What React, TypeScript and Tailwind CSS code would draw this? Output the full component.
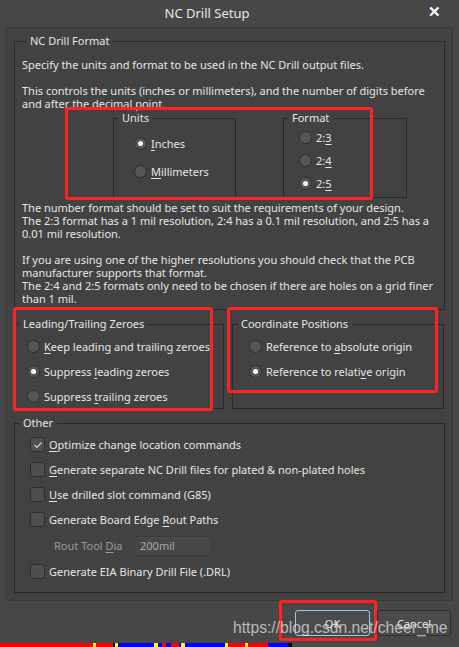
import React from "react";

const font = { fontFamily: '"Noto Sans", "Open Sans", Arial, sans-serif' };

function U({ children }: { children: React.ReactNode }) {
  return <span className="underline underline-offset-[2px] decoration-[1px]">{children}</span>;
}

function Radio({ checked }: { checked?: boolean }) {
  return (
    <span className="w-[13px] h-[13px] rounded-full bg-[#555555] border border-[#2f2f2f] flex items-center justify-center shrink-0">
      {checked && <span className="w-[5px] h-[5px] rounded-full bg-white" />}
    </span>
  );
}

function Check({ checked }: { checked?: boolean }) {
  return (
    <span className="w-[15px] h-[15px] rounded-[3px] bg-[#4e4e4e] border border-[#2f2f2f] flex items-center justify-center shrink-0">
      {checked && (
        <svg width="10" height="8" viewBox="0 0 10 8">
          <path d="M1.5 4 L4 6.5 L8.5 1.5" fill="none" stroke="#cfcfcf" strokeWidth="1.2" />
        </svg>
      )}
    </span>
  );
}

function Box({ title, className, children }: { title: string; className?: string; children: React.ReactNode }) {
  return (
    <fieldset className={"border border-[#2a2a2a] min-w-0 " + (className ?? "")}>
      <legend className="ml-[4px] px-[4px] text-[11px] leading-[14px] text-[#e6e6e6]">{title}</legend>
      {children}
    </fieldset>
  );
}

function RadioRow({ checked, children, h }: { checked?: boolean; children: React.ReactNode; h: string }) {
  return (
    <div className={"flex items-center gap-[4px] " + h}>
      <Radio checked={checked} />
      <span>{children}</span>
    </div>
  );
}

function CheckRow({ checked, children }: { checked?: boolean; children: React.ReactNode }) {
  return (
    <div className="flex items-center gap-[4px] h-[25px]">
      <Check checked={checked} />
      <span>{children}</span>
    </div>
  );
}

const strip: [number, string][] = [
  [93, "#ff0000"], [3, "#ffff00"], [17, "#ff0000"], [2, "#000080"], [3, "#ffff00"], [36, "#0000ff"],
  [4, "#ffff00"], [4, "#0000ff"], [4, "#ff0000"], [5, "#0000ff"], [8, "#ff0000"], [2, "#0000ff"],
  [4, "#ffff00"], [40, "#0000ff"], [3, "#ffff00"], [17, "#ff0000"], [3, "#ffff00"], [20, "#ff0000"],
  [20, "#0000ff"], [4, "#000000"], [167, "#4a4a4a"],
];

export default function App() {
  return (
    <div className="w-[459px] h-[647px] bg-[#474747] relative overflow-hidden whitespace-nowrap text-[#e6e6e6] text-[11px] leading-[13px]" style={font}>
      {/* title bar */}
      <div className="h-[27px] flex items-center justify-center pr-[45px] relative">
        <span className="text-[13px] text-[#e8e8e8]">NC Drill Setup</span>
        <span className="absolute right-[18px] top-[2px] text-[15px] leading-[18px] font-bold text-white">✕</span>
      </div>

      {/* main panel */}
      <div className="mx-[6px] h-[574px] border border-[#393939] bg-[#424242] px-[7px] pt-[6px] flex flex-col">
        <Box title="NC Drill Format" className="h-[276px] px-[7px]">
          <div className="pt-[10px] leading-[13px]">
            <div>Specify the units and format to be used in the NC Drill output files.</div>
            <div className="h-[13px]" />
            <div>This controls the units (inches or millimeters), and the number of digits before</div>
            <div>and after the decimal point.</div>
          </div>
          <div className="flex mt-[1px] pl-[91px] gap-[47px]">
            <Box title="Units" className="w-[123px] h-[87px]">
              <div className="pl-[20px] pt-[4px]">
                <RadioRow checked h="h-[28px]"><U>I</U>nches</RadioRow>
                <RadioRow h="h-[28px]"><U>M</U>illimeters</RadioRow>
              </div>
            </Box>
            <Box title="Format" className="w-[124px] h-[87px]">
              <div className="pl-[15px] pt-[1px]">
                <RadioRow h="h-[23px]">2:<U>3</U></RadioRow>
                <RadioRow h="h-[23px]">2:<U>4</U></RadioRow>
                <RadioRow checked h="h-[23px]">2:<U>5</U></RadioRow>
              </div>
            </Box>
          </div>
          <div className="pt-[3px]">
            <div>The number format should be set to suit the requirements of your design.</div>
            <div>The 2:3 format has a 1 mil resolution, 2:4 has a 0.1 mil resolution, and 2:5 has a</div>
            <div>0.01 mil resolution.</div>
            <div className="h-[13px]" />
            <div>If you are using one of the higher resolutions you should check that the PCB</div>
            <div>manufacturer supports that format.</div>
            <div>The 2:4 and 2:5 formats only need to be chosen if there are holes on a grid finer</div>
            <div>than 1 mil.</div>
          </div>
        </Box>

        <div className="flex gap-[8px] mt-[7px]">
          <Box title="Leading/Trailing Zeroes" className="w-[210px] h-[92px]">
            <div className="pl-[12px] pt-[3px]">
              <RadioRow h="h-[25px]"><U>K</U>eep leading and trailing zeroes</RadioRow>
              <RadioRow checked h="h-[25px]">Suppress <U>l</U>eading zeroes</RadioRow>
              <RadioRow h="h-[25px]">Suppress <U>t</U>railing zeroes</RadioRow>
            </div>
          </Box>
          <Box title="Coordinate Positions" className="w-[212px] h-[92px]">
            <div className="pl-[16px] pt-[3px]">
              <RadioRow h="h-[25px]">Reference to <U>a</U>bsolute origin</RadioRow>
              <RadioRow checked h="h-[25px]">Reference to relati<U>v</U>e origin</RadioRow>
            </div>
          </Box>
        </div>

        <Box title="Other" className="h-[177px] mt-[7px]">
          <div className="pl-[15px] pt-[2px]">
            <CheckRow checked><U>O</U>ptimize change location commands</CheckRow>
            <CheckRow><U>G</U>enerate separate NC Drill files for plated &amp; non-plated holes</CheckRow>
            <CheckRow><U>U</U>se drilled slot command (G85)</CheckRow>
            <CheckRow>Generate Board Edge <U>R</U>out Paths</CheckRow>
            <div className="flex items-center h-[27px] pl-[24px]">
              <span className="text-[#9a9a9a] w-[80px]">Rout Tool <U>D</U>ia</span>
              <span className="w-[78px] h-[20px] rounded-[3px] bg-[#474747] border border-[#3c3c3c] text-[#a8a8a8] flex items-center pl-[5px]">200mil</span>
            </div>
            <CheckRow>Generate EIA Binary Drill File (.DRL)</CheckRow>
          </div>
        </Box>
      </div>

      {/* buttons */}
      <div className="flex justify-end gap-[7px] pr-[8px] pt-[9px]">
        <button className="w-[75px] h-[26px] rounded-[3px] border border-[#9cc6ec] bg-[#4b4b4b] text-[#e6e6e6]">OK</button>
        <button className="w-[74px] h-[26px] rounded-[3px] border border-[#2e2e2e] bg-[#4b4b4b] text-[#e6e6e6]">Cancel</button>
      </div>

      {/* bottom strip */}
      <div className="absolute left-0 bottom-0 h-[4px] w-full flex">
        {strip.map(([w, c], i) => (
          <div key={i} style={{ width: w, background: c }} />
        ))}
      </div>

      {/* annotations */}
      <div className="absolute left-[65px] top-[107px] w-[308px] h-[93px] border-[3px] border-[#ff2222] rounded-[3px]" />
      <div className="absolute left-[13px] top-[307px] w-[200px] h-[104px] border-[3px] border-[#ff2222] rounded-[3px]" />
      <div className="absolute left-[227px] top-[307px] w-[211px] h-[86px] border-[3px] border-[#ff2222] rounded-[3px]" />
      <div className="absolute left-[279px] top-[600px] w-[98px] h-[41px] border-[3px] border-[#ff2222] rounded-[3px]" />

      {/* watermark */}
      <div className="absolute left-[233px] top-[617px] text-[15.7px] leading-[22px] text-[rgba(235,235,235,0.7)]" style={{ fontFamily: '"Liberation Sans", Arial, sans-serif' }}>
        https://blog.csdn.net/cheer_me
      </div>
    </div>
  );
}
